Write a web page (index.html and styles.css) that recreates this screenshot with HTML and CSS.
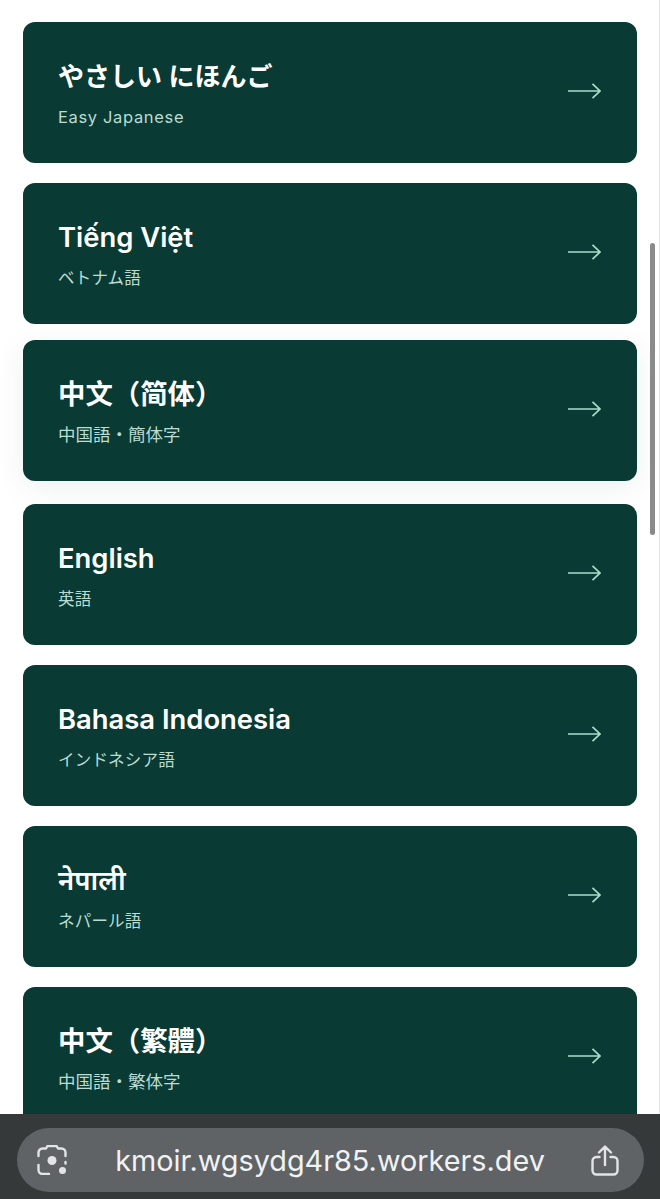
FILE: index.html
```html
<!DOCTYPE html>
<html lang="ja">
<head>
<meta charset="utf-8">
<title>Languages</title>
<link rel="stylesheet" href="styles.css">
</head>
<body>
<main class="list">
  <a class="card"><div class="labels"><div class="title title-kana">やさしい にほんご</div><div class="sub sub-latin">Easy Japanese</div></div><svg class="arrow" viewBox="0 0 33 16"><path d="M0 8H32M24.500 .8 32 8 24.500 15.200"/></svg></a>
  <a class="card"><div class="labels"><div class="title">Tiếng Việt</div><div class="sub">ベトナム語</div></div><svg class="arrow" viewBox="0 0 33 16"><path d="M0 8H32M24.500 .8 32 8 24.500 15.200"/></svg></a>
  <a class="card card-hover"><div class="labels"><div class="title" lang="zh-CN">中文（简体）</div><div class="sub sub-wide">中国語・簡体字</div></div><svg class="arrow" viewBox="0 0 33 16"><path d="M0 8H32M24.500 .8 32 8 24.500 15.200"/></svg></a>
  <a class="card"><div class="labels"><div class="title">English</div><div class="sub">英語</div></div><svg class="arrow" viewBox="0 0 33 16"><path d="M0 8H32M24.500 .8 32 8 24.500 15.200"/></svg></a>
  <a class="card"><div class="labels"><div class="title">Bahasa Indonesia</div><div class="sub">インドネシア語</div></div><svg class="arrow" viewBox="0 0 33 16"><path d="M0 8H32M24.500 .8 32 8 24.500 15.200"/></svg></a>
  <a class="card"><div class="labels"><div class="title">नेपाली</div><div class="sub">ネパール語</div></div><svg class="arrow" viewBox="0 0 33 16"><path d="M0 8H32M24.500 .8 32 8 24.500 15.200"/></svg></a>
  <a class="card"><div class="labels"><div class="title" lang="zh-TW">中文（繁體）</div><div class="sub sub-wide">中国語・繁体字</div></div><svg class="arrow" viewBox="0 0 33 16"><path d="M0 8H32M24.500 .8 32 8 24.500 15.200"/></svg></a>
</main>
<div class="scroll-thumb"></div>
<footer class="browser-bar">
  <div class="pill">
    <svg class="lens" viewBox="0 0 30 30"><path d="M1.500 11V7.500A4 4 0 0 1 5.500 3.500H9L10.500 1H19.500L21 3.500H24.500A4 4 0 0 1 28.500 7.500V11M1.500 20V25A4 4 0 0 0 5.500 29H12"/><circle class="lens-dot" cx="15" cy="15.500" r="4.500"/><circle class="lens-dot" cx="25.500" cy="25.500" r="3.500"/><path d="M28.500 17V18.500"/></svg>
    <span class="url">kmoir.wgsydg4r85.workers.dev</span>
    <svg class="share" viewBox="0 0 28 31"><path d="M14 20V2M8 7.500 14 1.500 20 7.500M8.500 12H5.500A4 4 0 0 0 1.500 16V25.500A4 4 0 0 0 5.500 29.500H22.500A4 4 0 0 0 26.500 25.500V16A4 4 0 0 0 22.500 12H19.500"/></svg>
  </div>
</footer>
</body>
</html>
```
FILE: styles.css
```css
html, body {
  margin: 0;
  height: 1199px;
  overflow: hidden;
  background: #fff;
}
body {
  font-family: Inter, "Noto Sans CJK JP", "Noto Sans", sans-serif;
  border-right: 1px solid #e4e4e4;
  box-sizing: border-box;
}
.list {
  display: flex;
  flex-direction: column;
  gap: 20px;
  padding: 22px 23px 0 23px;
  width: 660px;
  box-sizing: border-box;
}
.card {
  display: flex;
  flex: none;
  align-items: center;
  justify-content: space-between;
  height: 141px;
  padding: 0 36px 0 35px;
  box-sizing: border-box;
  border-radius: 12px;
  background: #0a3a34;
  color: #fff;
}
.card-hover {
  margin: -4px 0 3px;
  box-shadow: 0 6px 30px rgba(11, 58, 53, 0.08);
}
.labels {
  display: flex;
  flex-direction: column;
  gap: 11px;
  padding-top: 1px;
}
.title {
  font-size: 27.400px;
  line-height: 36px;
  font-weight: 600;
}
.title-kana {
  font-size: 26px;
  padding-top: 1px;
  margin-bottom: -1px;
}
.sub {
  font-size: 16.500px;
  line-height: 24px;
  letter-spacing: 0.2px;
  color: #b9ddd2;
}
.sub-latin {
  letter-spacing: 0.65px;
}
.sub-wide {
  font-size: 17.500px;
  letter-spacing: 0;
}
.arrow {
  width: 33px;
  height: 16px;
  margin-bottom: 3px;
  fill: none;
  stroke: #a9dccb;
  stroke-width: 1.700;
}
.scroll-thumb {
  position: fixed;
  left: 650px;
  top: 243px;
  width: 5px;
  height: 292px;
  border-radius: 3px;
  background: #8a8a8a;
}
.browser-bar {
  position: fixed;
  left: 0;
  right: 0;
  top: 1114px;
  height: 85px;
  padding: 14px 16px 7px 17px;
  box-sizing: border-box;
  background: #36393a;
}
.pill {
  display: flex;
  align-items: center;
  height: 64px;
  padding: 0 25px 0 20px;
  border-radius: 32px;
  background: #5f6366;
  color: #f1f2f2;
}
.url {
  flex: 1;
  padding-left: 2px;
  text-align: center;
  font-size: 28.800px;
  font-weight: 400;
  white-space: nowrap;
}
.lens, .share {
  flex: none;
  fill: none;
  stroke: #e2e4e5;
  stroke-width: 2.400;
  stroke-linecap: round;
  stroke-linejoin: round;
}
.lens {
  width: 30px;
  height: 30px;
}
.lens-dot {
  fill: #e2e4e5;
  stroke: none;
}
.share {
  width: 28px;
  height: 31px;
}
```
